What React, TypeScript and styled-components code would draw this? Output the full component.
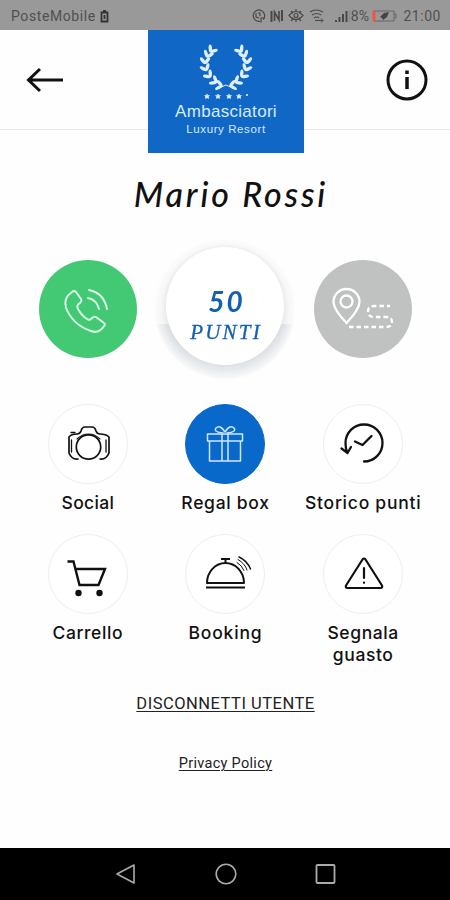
import type { ReactNode } from "react";
import styled, { createGlobalStyle } from "styled-components";

const GlobalStyle = createGlobalStyle`
  * {
    box-sizing: border-box;
  }
  body {
    margin: 0;
    background: #fefefe;
  }
`;

const Screen = styled.div`
  width: 450px;
  height: 900px;
  display: flex;
  flex-direction: column;
  overflow: hidden;
  background: #fefefe;
  color: #111;
  font-family: Roboto, "Liberation Sans", sans-serif;
`;

const StatusBar = styled.div`
  flex: none;
  height: 30px;
  padding: 2px 9px 0 11px;
  display: flex;
  align-items: center;
  justify-content: space-between;
  background: #999;
  color: #505050;
  font-size: 14px;
`;

const StatusGroup = styled.div`
  display: flex;
  align-items: center;
`;

const Carrier = styled.span`
  letter-spacing: 0.6px;
  margin-right: 4px;
`;

const StatusText = styled.span<{ $space?: string }>`
  letter-spacing: ${(p) => p.$space || "0"};
`;

const Header = styled.header`
  flex: none;
  height: 100px;
  padding: 0 22px 0 26px;
  display: flex;
  align-items: flex-start;
  justify-content: space-between;
  border-bottom: 1px solid #e9e9e9;
`;

const HeaderButton = styled.button`
  height: 100px;
  padding: 0;
  border: 0;
  background: none;
  display: flex;
  align-items: center;
`;

const LogoBox = styled.div`
  width: 156px;
  height: 123px;
  margin-left: 42px;
  margin-right: 40px;
  padding-top: 14px;
  display: flex;
  flex-direction: column;
  align-items: center;
  background: #1067c6;
  color: #d8ebff;
  font-family: "Liberation Sans", Arial, sans-serif;
  z-index: 1;
`;

const LogoName = styled.span`
  margin-top: 3px;
  font-size: 17px;
  line-height: 18px;
  letter-spacing: 0.3px;
`;

const LogoSub = styled.span`
  font-size: 11.5px;
  line-height: 16px;
  letter-spacing: 0.6px;
`;

const UserName = styled.h1`
  flex: none;
  height: 66px;
  margin: 30px 0 0 12px;
  text-align: center;
  font-family: "Z003", "Lato", sans-serif;
  font-style: italic;
  font-weight: 500;
  font-size: 34px;
  line-height: 68px;
  letter-spacing: 2.8px;
  color: #111;
`;

const TopActions = styled.div`
  flex: none;
  height: 142px;
  margin-top: 12px;
  padding: 0 38px 0 39px;
  display: flex;
  align-items: center;
  justify-content: space-between;
`;

const RoundButton = styled.button<{ $bg: string }>`
  width: 98px;
  height: 98px;
  padding: 0;
  border: 0;
  border-radius: 50%;
  background: ${(p) => p.$bg};
`;

const PointsHalo = styled.div`
  width: 142px;
  height: 142px;
  margin-right: 2px;
  padding-top: 9px;
  display: flex;
  justify-content: center;
  border-radius: 50%;
  background: linear-gradient(#f7f7f7 0, #f3f3f4 60.5%, #e1e4e8 61%, #e8ebee 100%);
  mask-image: radial-gradient(closest-side, #000 86%, rgba(0, 0, 0, 0.55) 94%, transparent 100%);
`;

const Points = styled.div`
  width: 118px;
  height: 118px;
  padding-top: 39px;
  border-radius: 50%;
  background: #fff;
  box-shadow: 0 0 5px rgba(70, 80, 90, 0.12);
  color: #1260b2;
  text-align: center;
  font-family: "Lato", sans-serif;
  font-style: italic;
`;

const PointsValue = styled.div`
  padding-left: 4px;
  font-size: 28px;
  font-weight: 700;
  line-height: 31px;
  letter-spacing: 2px;
`;

const PointsLabel = styled.div`
  padding-left: 3px;
  font-family: "Liberation Serif", serif;
  font-size: 21px;
  line-height: 30px;
  letter-spacing: 2.2px;
  -webkit-text-stroke: 0.3px #1260b2;
`;

const Menu = styled.nav`
  flex: none;
  height: 260px;
  margin-top: 24px;
  padding: 0 18px 0 19px;
  display: grid;
  grid-template-columns: repeat(3, 1fr);
  grid-auto-rows: 130px;
`;

const MenuItem = styled.div`
  display: flex;
  flex-direction: column;
  align-items: center;
`;

const MenuCircle = styled.div<{ $active?: boolean }>`
  flex: none;
  width: 80px;
  height: 80px;
  border-radius: 50%;
  border: 1px solid ${(p) => (p.$active ? "#0869cb" : "#eee")};
  background: ${(p) => (p.$active ? "#0869cb" : "#fff")};
  color: ${(p) => (p.$active ? "#cfe6ff" : "#111")};

  svg {
    display: block;
    margin: -1px;
  }
`;

const MenuLabel = styled.span<{ $space: string }>`
  margin-top: 8px;
  font-family: Inter, "Noto Sans", sans-serif;
  font-size: 17.5px;
  font-weight: 550;
  line-height: 22px;
  letter-spacing: ${(p) => p.$space};
  text-align: center;
  white-space: pre;
`;

const Links = styled.div`
  flex: 1;
  padding: 30px 0 0 1px;
  display: flex;
  flex-direction: column;
  align-items: center;
`;

const TextLink = styled.a<{ $size: number; $space: string }>`
  height: 20px;
  margin-bottom: 40px;
  font-size: ${(p) => p.$size}px;
  line-height: 20px;
  letter-spacing: ${(p) => p.$space};
  color: #222;
  text-decoration: underline;
  text-decoration-thickness: 1px;
  text-underline-offset: 2px;
`;

const NavBar = styled.div`
  flex: none;
  height: 52px;
  padding: 0 114px 0 115px;
  display: flex;
  align-items: center;
  justify-content: space-between;
  background: #000;
`;

// x, y and growth direction of each leaf pair on the left branch
const leaves = [
  [23, 42, 192], [17.5, 38.5, 212], [11.5, 33, 228], [7.5, 26.5, 247],
  [6, 19.5, 270], [8, 13, 292], [11.5, 8, 305],
];

function Laurel() {
  const branch = leaves.map(([x, y, angle]) => (
    <g key={y} transform={`translate(${x} ${y}) rotate(${angle})`}>
      <ellipse cx="3.6" rx="4" ry="1.7" transform="rotate(-38)" />
      <ellipse cx="3.6" rx="4" ry="1.7" transform="rotate(38)" />
    </g>
  ));
  return (
    <svg width="54" height="46" viewBox="0 0 54 46" fill="#e0f0ff">
      <g>{branch}</g>
      <g transform="translate(54 0) scale(-1 1)">{branch}</g>
      <path d="M20 44l7-3 7 3" fill="none" stroke="#e0f0ff" />
    </svg>
  );
}

function Stars() {
  return (
    <svg width="48" height="10" viewBox="0 0 48 10" fill="#e6f3ff">
      {[5, 16, 27, 37].map((x) => (
        <path
          key={x}
          d={`M${x} 4l.8 1.4 1.7.2-1.2 1.2.3 1.7-1.6-.8-1.6.8.3-1.7-1.2-1.2 1.7-.2z`}
          stroke="#e6f3ff"
          strokeWidth=".6"
        />
      ))}
      <circle cx="45" cy="5" r="1.1" />
    </svg>
  );
}

function StatusIcons() {
  return (
    <svg width="101" height="18" viewBox="248 7 101 18" fill="none" stroke="#484848" strokeWidth="1.2">
      <path d="M258 21.3a5.7 5.7 0 1 1 3.2-1.8M254 13v4l3 1M259 22.5v-4.5h4M256 13h2v3" />
      <path d="M269.5 11v11M280 10v11" strokeWidth="2" />
      <path d="M272.5 21v-9l4.5 8v-9" strokeWidth="1.6" />
      <path d="M287 15.5q7-8 14 0q-7 8-14 0ZM289 11l2 2M294 9v3M299 11l-2 2M289 21l2-2M294 22v-2M299 21l-2-2" />
      <circle cx="294" cy="15.5" r="2" />
      <path d="M308 12q6-4 13 0M310 15q5-3 9 0M312 18q3-2 5 0" />
      <path d="M313 20.5h8m-2-2 2 2-2 2" strokeWidth="1" />
      <path d="M334 20v2M337.5 17v5M341 14v8M344.5 11v11" strokeWidth="2" />
      <path d="M347.8 10v12" stroke="#858585" strokeWidth="1" />
    </svg>
  );
}

function Icon({ children, width = 1.7 }: { children: ReactNode; width?: number }) {
  return (
    <svg
      width="80"
      height="80"
      viewBox="0 0 80 80"
      fill="none"
      stroke="currentColor"
      strokeWidth={width}
      strokeLinecap="round"
      strokeLinejoin="round"
    >
      {children}
    </svg>
  );
}

const menu = [
  {
    label: "Social",
    space: "0.3px",
    icon: (
      <Icon>
        <circle cx="40.5" cy="43" r="12.2" />
        <path d="M30 55q-6 1-9-6V33q2-3 8-3q3 0 4-3q1-4 4-4h7q3 0 4 4q1 3 4 3q6 0 9 3v16q-3 7-9 6" />
        <path d="M23.5 36v12M58 36v12M23 28.5h4" strokeWidth="1.3" />
        <path d="M29 35q5-5 11.500-5T52 35" strokeWidth="1.1" />
      </Icon>
    ),
  },
  {
    label: "Regal box",
    space: "0.7px",
    active: true,
    icon: (
      <Icon width={1.5}>
        <path d="M22.500 30H57.500v7H22.500zM24.500 37h31v20H24.500zM37 30v27M43 30v27" />
        <path d="M38 29q-10-1-7-5q4-4 9 4M42 29q10-1 7-5q-4-4-9 4" />
      </Icon>
    ),
  },
  {
    label: "Storico punti",
    space: "0.75px",
    icon: (
      <Icon width={2.3}>
        <path d="M41 57.500A18.500 18.500 0 1 0 22.500 39q0 5 1.500 9M18.500 44.500l6 4.500 3.500-6M32 37.500l7.500 3.500 9-9" />
      </Icon>
    ),
  },
  {
    label: "Carrello",
    space: "0.6px",
    icon: (
      <Icon width={2.4}>
        <path d="M19.500 27.500h6l6 23.500h19l6.500-16H28" strokeLinecap="butt" strokeLinejoin="miter" />
        <circle cx="30.500" cy="59" r="2" fill="currentColor" />
        <circle cx="51.500" cy="59" r="2" fill="currentColor" />
      </Icon>
    ),
  },
  {
    label: "Booking",
    space: "0.85px",
    icon: (
      <Icon width={2}>
        <path d="M22 49a18.500 20 0 0 1 37 0ZM21 53.500h39M36 25h9M40.500 25v4" strokeLinecap="butt" />
        <path d="M52 28.500q5 3 7 8M53 25.500q7 4 9 10.500" strokeWidth="1" />
        <path d="M54 23q8 3.500 11.500 12" strokeWidth="1.500" />
      </Icon>
    ),
  },
  {
    label: "Segnala\nguasto",
    space: "0.6px",
    icon: (
      <Icon width={2.200}>
        <path d="M39.500 25.500q1.500-2 3 0L59 51.500q.8 2.500-1.500 2.500H24.500q-2.300 0-1.500-2.500ZM41 34v10M41 48.500v.3" />
      </Icon>
    ),
  },
];

export default function App() {
  return (
    <>
      <GlobalStyle />
      <Screen>
        <StatusBar>
          <StatusGroup>
            <Carrier>PosteMobile</Carrier>
            <svg width="9" height="13" viewBox="0 0 9 13" fill="none" stroke="#333" strokeWidth="1.8">
              <path d="M1.5 2.5h6v9h-6zM3 1h3M4.5 5v4" />
            </svg>
          </StatusGroup>
          <StatusGroup>
            <StatusIcons />
            <StatusText $space="0.3px">8%</StatusText>
            <svg width="30" height="14" viewBox="0 0 30 14" fill="none" stroke="#666">
              <path d="M5 2h20v10H5M25 5h2v4h-2" />
              <path d="M5 1.5v11" stroke="#ed5549" strokeWidth="3" />
              <path d="M11 8l4-4 5-1-2 5-4 3-1-2Z" fill="#444" stroke="none" />
            </svg>
            <StatusText $space="0.55px">&nbsp;21:00</StatusText>
          </StatusGroup>
        </StatusBar>

        <Header>
          <HeaderButton aria-label="Indietro">
            <svg width="38" height="28" viewBox="0 0 38 28" fill="none" stroke="#111" strokeWidth="3">
              <path d="M37 14H3M14 3 2.5 14 14 25" />
            </svg>
          </HeaderButton>
          <LogoBox>
            <Laurel />
            <Stars />
            <LogoName>Ambasciatori</LogoName>
            <LogoSub>Luxury Resort</LogoSub>
          </LogoBox>
          <HeaderButton aria-label="Informazioni">
            <svg width="42" height="42" viewBox="0 0 42 42" fill="none" stroke="#111" strokeWidth="3">
              <circle cx="21" cy="21" r="19" />
              <path d="M21 18v12M21 11.500v3.500" strokeWidth="3.500" />
            </svg>
          </HeaderButton>
        </Header>

        <UserName>Mario Rossi</UserName>

        <TopActions>
          <RoundButton $bg="#43c974" aria-label="Chiama">
            <svg
              width="98"
              height="98"
              viewBox="0 0 98 98"
              fill="none"
              stroke="#dcffe8"
              strokeWidth="1.9"
              strokeLinejoin="round"
              strokeLinecap="round"
            >
              <path d="M33 32q2-2 4 0l5 7q1 2-1 4q-4 2-2 6q4 7 9 10q3 2 5-1q2-2 4-1l8 6q2 1 0 3q-5 8-13 5Q34 65 27 48q-3-10 6-16Z" />
              <path d="M50 30q15 3 18 19M49 38q9 2 11 11" />
            </svg>
          </RoundButton>
          <PointsHalo>
            <Points>
              <PointsValue>50</PointsValue>
              <PointsLabel>PUNTI</PointsLabel>
            </Points>
          </PointsHalo>
          <RoundButton $bg="#c0c2c1" aria-label="Percorso">
            <svg width="98" height="98" viewBox="0 0 98 98" fill="none" stroke="#fff" strokeWidth="2.3">
              <path d="M32.500 63Q20 50 19.500 42a13 13 0 0 1 26 0Q45 50 32.500 63Z" />
              <circle cx="32.500" cy="41.500" r="6" />
              <path d="M35 67h37q6 0 6-5t-6-5H60q-6 0-6-5.500t6-5.500h16" strokeDasharray="4.500 3" />
            </svg>
          </RoundButton>
        </TopActions>

        <Menu>
          {menu.map((item) => (
            <MenuItem key={item.label}>
              <MenuCircle $active={item.active}>{item.icon}</MenuCircle>
              <MenuLabel $space={item.space}>{item.label}</MenuLabel>
            </MenuItem>
          ))}
        </Menu>

        <Links>
          <TextLink $size={16.5} $space="0.5px">DISCONNETTI UTENTE</TextLink>
          <TextLink $size={14.5} $space="0.3px">Privacy Policy</TextLink>
        </Links>

        <NavBar>
          <svg width="21" height="22" viewBox="0 0 21 22" fill="none" stroke="#aaa" strokeWidth="1.6">
            <path d="M19 2v18L2 11Z" strokeLinejoin="round" />
          </svg>
          <svg width="22" height="22" viewBox="0 0 22 22" fill="none" stroke="#aaa" strokeWidth="1.6">
            <circle cx="11" cy="11" r="9.8" />
          </svg>
          <svg width="21" height="22" viewBox="0 0 21 22" fill="none" stroke="#aaa" strokeWidth="1.8">
            <rect x="1.5" y="2" width="18" height="18" rx="1" />
          </svg>
        </NavBar>
      </Screen>
    </>
  );
}
